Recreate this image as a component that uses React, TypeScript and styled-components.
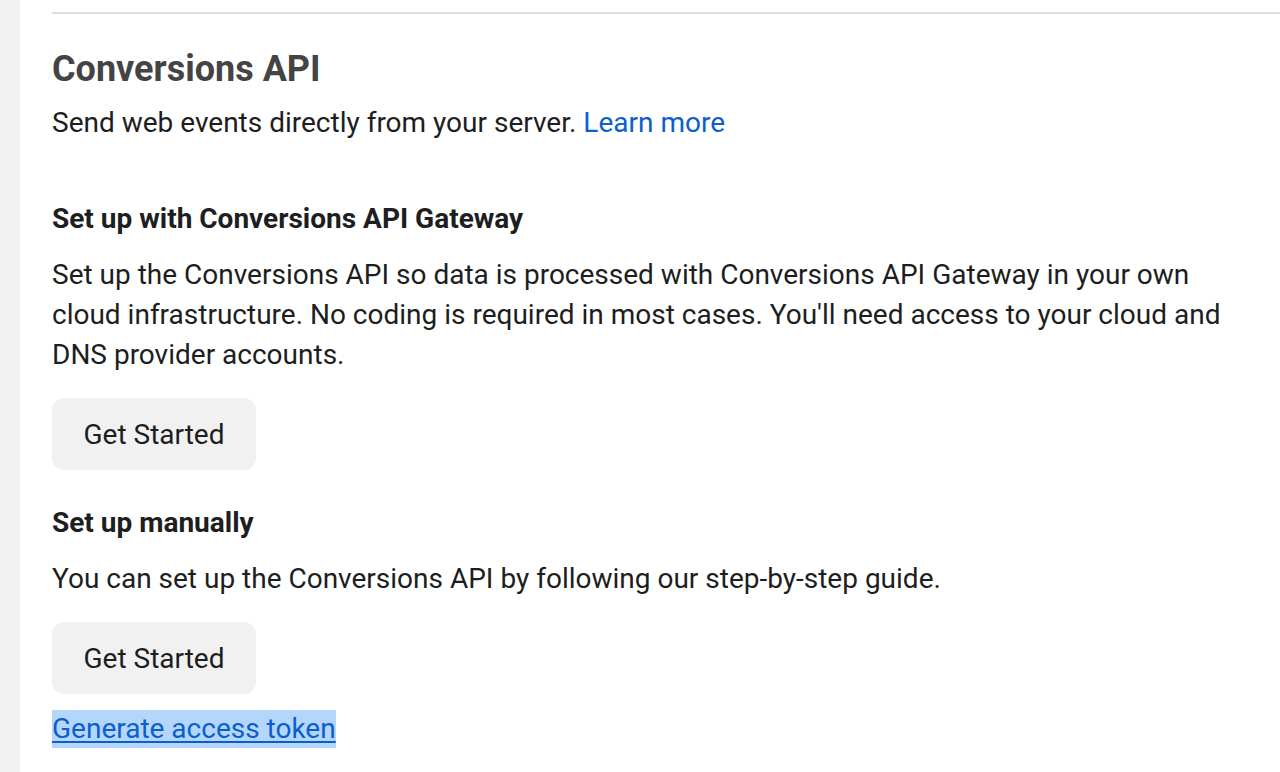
import styled, { createGlobalStyle } from "styled-components";

const GlobalStyle = createGlobalStyle`
  html, body {
    margin: 0;
    padding: 0;
    background: #ffffff;
  }
  body {
    font-family: Roboto, "Liberation Sans", sans-serif;
    -webkit-font-smoothing: antialiased;
  }
`;

const Page = styled.div`
  display: flex;
  min-height: 772px;
`;

const SideStrip = styled.div`
  width: 20px;
  flex-shrink: 0;
  background: #f2f2f2;
`;

const Main = styled.main`
  flex: 1;
  padding: 12px 0 0 32px;
`;

const Divider = styled.hr`
  margin: 0;
  border: none;
  height: 2px;
  background: #dcdde1;
`;

const Title = styled.h1`
  margin: 31px 0 0;
  font-size: 36px;
  line-height: 48px;
  font-weight: 700;
  color: #444444;
`;

const Text = styled.p<{ $top?: number }>`
  margin: ${(p) => p.$top ?? 0}px 0 0;
  font-size: 28px;
  line-height: 40px;
  color: #1c1e21;
  padding-right: 40px;
`;

const Link = styled.a`
  color: #0b5fcc;
  text-decoration: none;
  cursor: pointer;
`;

const SubTitle = styled.h2<{ $top: number }>`
  margin: ${(p) => p.$top}px 0 0;
  font-size: 28px;
  line-height: 40px;
  font-weight: 700;
  color: #1c1e21;
`;

const Button = styled.button`
  display: block;
  margin-top: 23px;
  width: 204px;
  height: 72px;
  border: none;
  border-radius: 12px;
  background: #f1f1f1;
  font-family: Roboto, "Liberation Sans", sans-serif;
  font-size: 28px;
  color: #1c1e21;
  cursor: pointer;
`;

const TokenLink = styled.a`
  display: inline-block;
  margin-top: 16px;
  height: 38px;
  line-height: 38px;
  font-size: 28px;
  color: #0b5fcc;
  text-decoration: underline;
  text-underline-offset: 3px;
  background: #b4d6fd;
  cursor: pointer;
`;

export default function App() {
  return (
    <>
      <GlobalStyle />
      <Page>
        <SideStrip />
        <Main>
          <Divider />
          <Title>Conversions API</Title>
          <Text $top={10}>
            Send web events directly from your server. <Link>Learn more</Link>
          </Text>

          <SubTitle $top={56}>Set up with Conversions API Gateway</SubTitle>
          <Text $top={16}>
            Set up the Conversions API so data is processed with Conversions API Gateway in your own
            cloud infrastructure. No coding is required in most cases. You'll need access to your cloud and
            DNS provider accounts.
          </Text>
          <Button>Get Started</Button>

          <SubTitle $top={33}>Set up manually</SubTitle>
          <Text $top={16}>
            You can set up the Conversions API by following our step-by-step guide.
          </Text>
          <Button>Get Started</Button>

          <TokenLink>Generate access token</TokenLink>
        </Main>
      </Page>
    </>
  );
}
